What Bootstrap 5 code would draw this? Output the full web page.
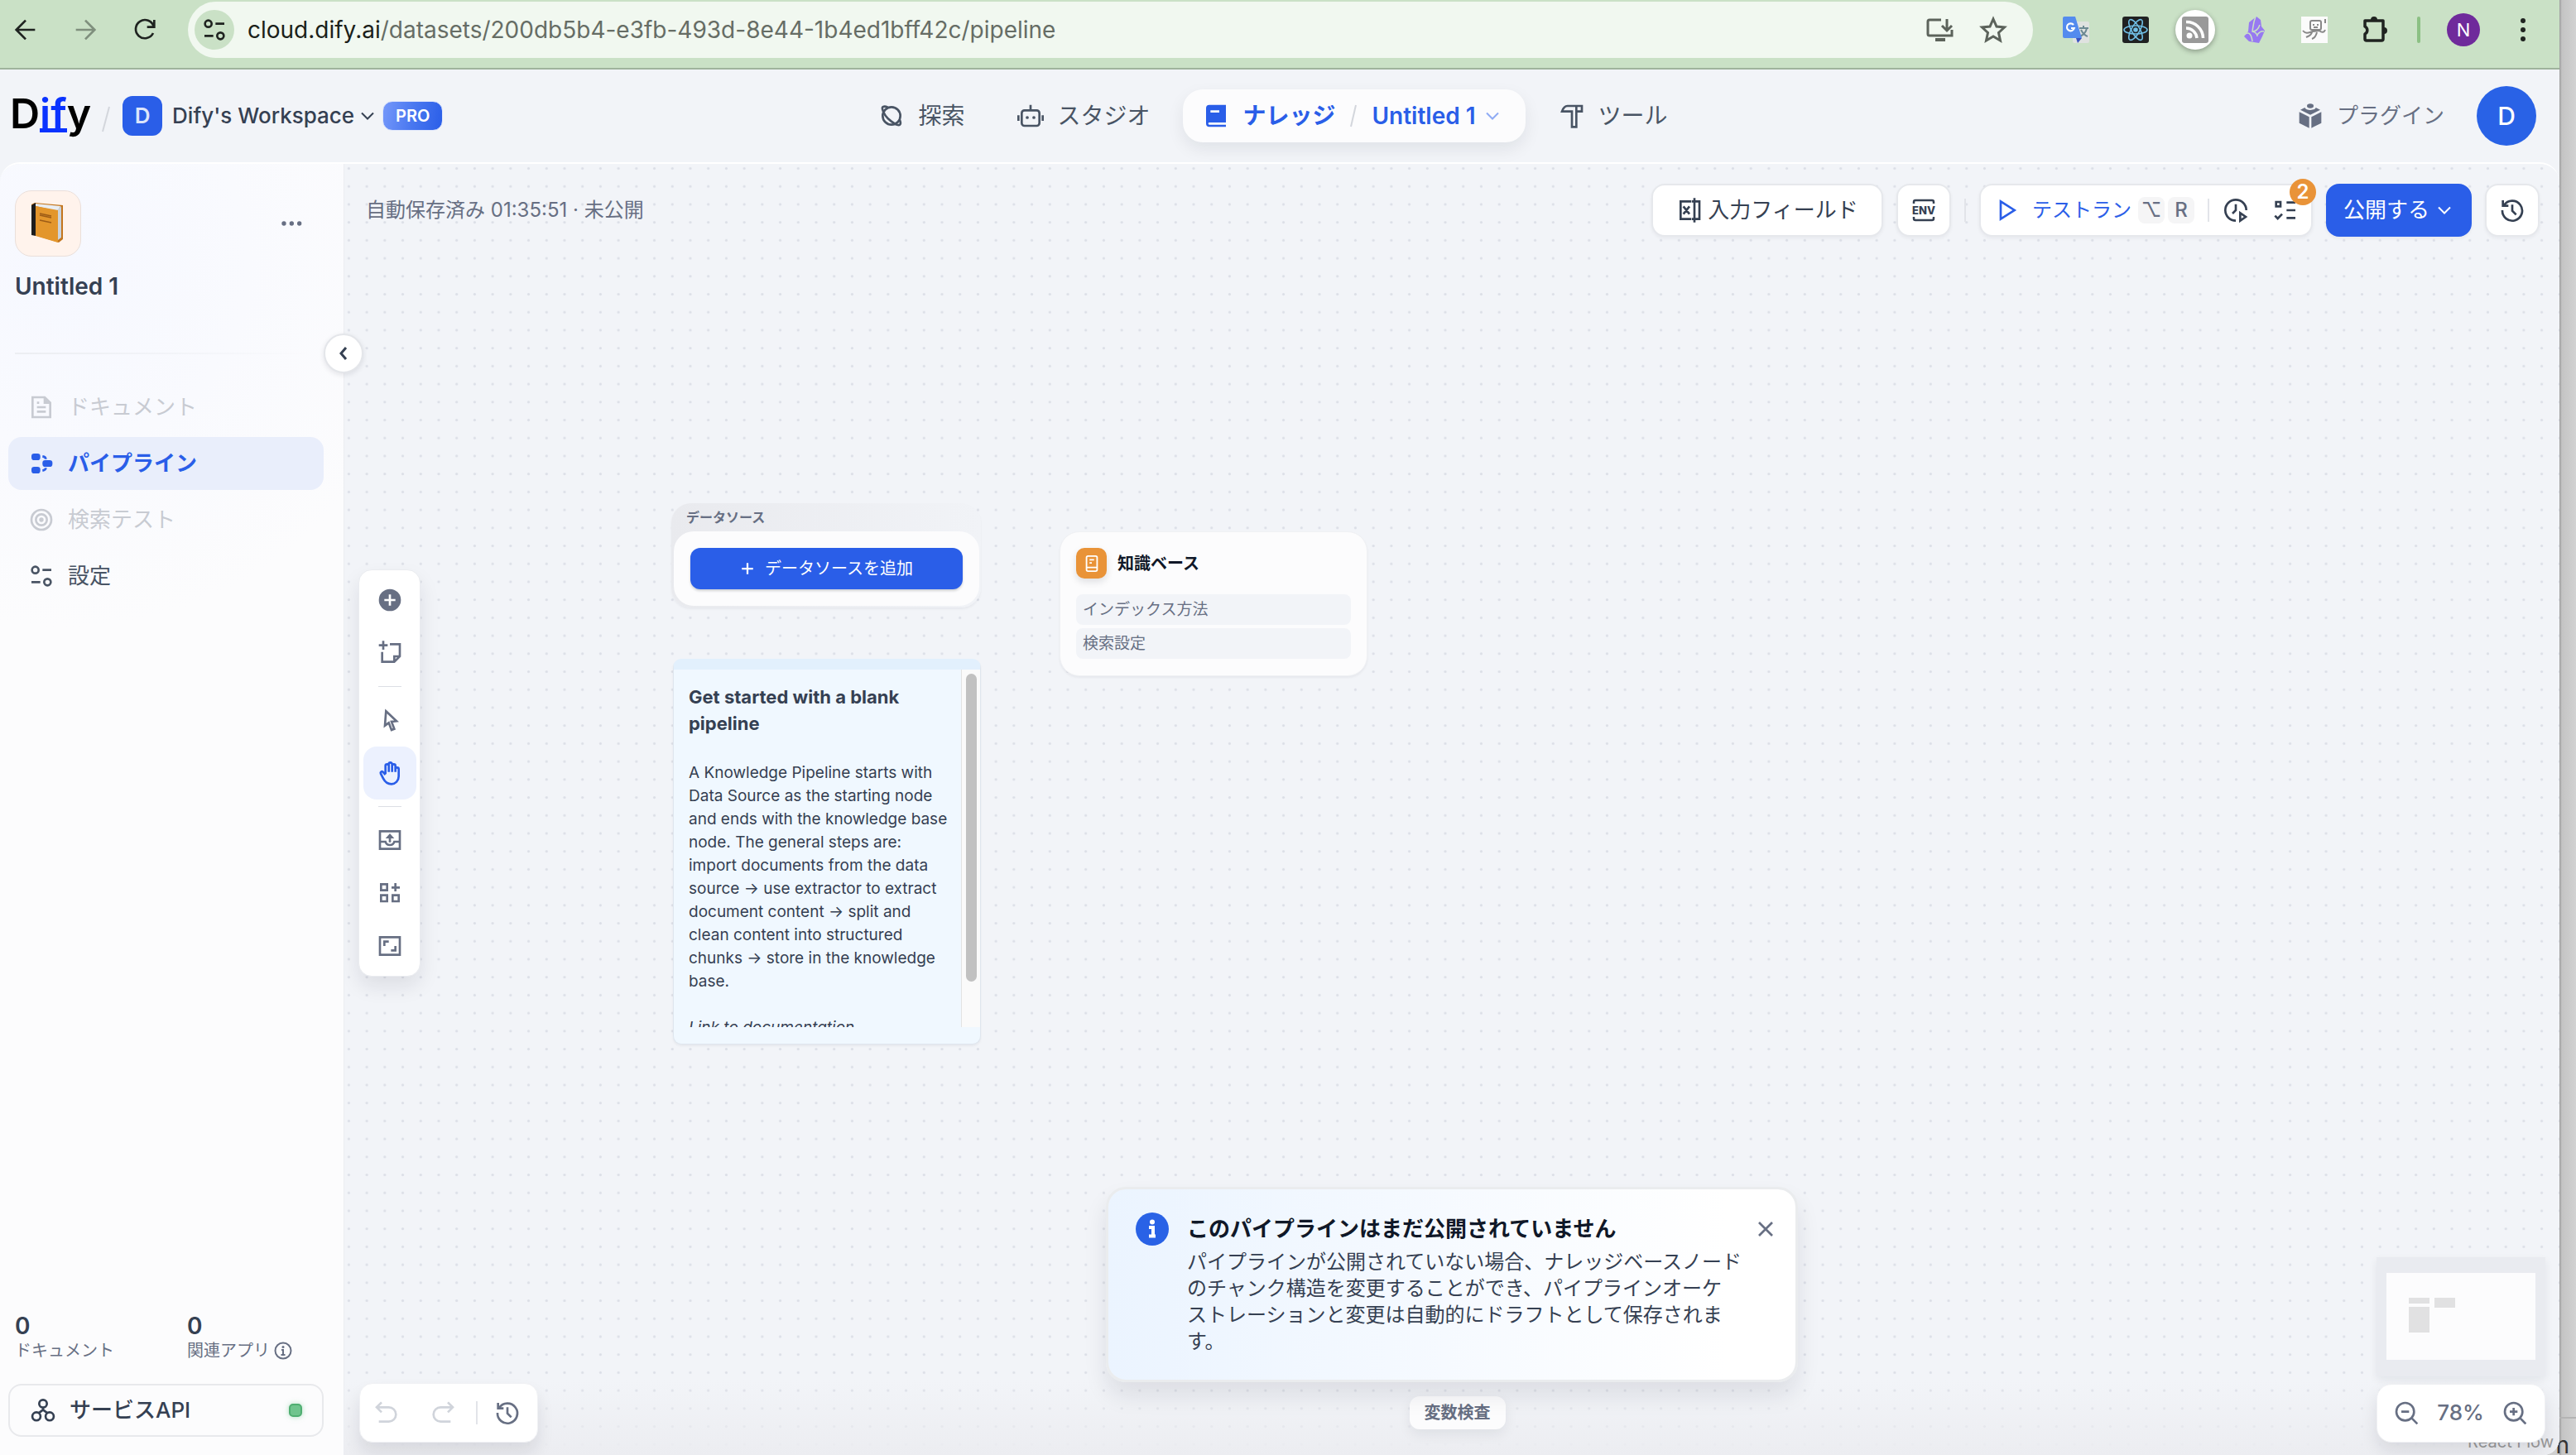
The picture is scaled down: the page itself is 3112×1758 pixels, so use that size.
<!DOCTYPE html>
<html lang="ja">
<head>
<meta charset="utf-8">
<meta name="viewport" content="width=device-width, initial-scale=1">
<title>Untitled 1 - Dify</title>
<link href="https://cdn.jsdelivr.net/npm/bootstrap@5.3.0/dist/css/bootstrap.min.css" rel="stylesheet">
<style>
:root{--blue:#2a5ee8;--ink:#354052;--soft:#676f83;--bg:#f2f4f8;--faint:#c8cbd2}
body{font-family:Inter,"Noto Sans CJK JP",sans-serif;font-size:26px;line-height:32px;color:var(--ink);background:#cfcfcf;overflow:hidden}
a{color:inherit;text-decoration:none}
svg{display:block;flex:none}
.ic{width:32px;height:32px;fill:none;stroke:currentColor;stroke-width:2}
.ic-s{width:24px;height:24px}
.bold-line{stroke-width:3}
.f{fill:currentColor;stroke:none}
.plain{border:0;background:none;padding:0;color:inherit;display:flex;align-items:center;justify-content:center}
.desk{width:20px;background:linear-gradient(90deg,#9c9c9c,#c4c4c4 3px,#d2d2d2);position:relative}
.desk-line{position:absolute;left:0;right:0;bottom:44px;height:2px;background:#b4b4b4}
.desk-n{position:absolute;right:8px;bottom:-4px;font-size:28px;color:#333}
.win{position:relative;z-index:1;background:var(--bg);border-radius:0 0 20px 0;overflow:hidden;min-width:0}
/* browser bar */
.chrome-bar{height:84px;background:#cae1c6;border-bottom:2px solid #9fb39c;color:#1f2320;padding:0 28px 10px 15px}
.fwd{margin-left:40px;color:#7f8f7d}
.reload{margin-left:40px}
.addr{height:68px;border-radius:34px;background:#f1f8f0;padding:0 30px 0 8px;margin-left:36px;margin-right:36px}
.site{width:48px;height:48px;border-radius:50%;background:#cae1c6}
.url{font-family:Inter,sans-serif;font-size:28px;color:#666d65;margin-left:16px}
.url b{font-weight:400;color:#1b1f1a}
.addr-icons{gap:28px}
.ext-row{gap:40px}
.rss{width:48px;height:48px;border-radius:50%;background:#fff;box-shadow:0 2px 6px #0005;margin:0 -8px}
.bar-sep{width:4px;height:32px;border-radius:2px;background:#8cc084;margin:0 32px 0 34px}
.me{width:40px;height:40px;border-radius:50%;background:#6f2a9b;color:#fff;font-size:22px;margin-right:36px}
/* app header */
.app-head{height:112px;padding:0 28px 0 12px}
.side-col{flex:1 1 0}
.logo{font-size:50px;line-height:56px;font-weight:600;color:#000;height:62px}
.logo i{font-style:normal;color:#0a33ff;background:linear-gradient(#0a33ff,#0a33ff) no-repeat 0 48px/100% 5px}
.slash{margin:8px 14px 0 12px}
.wsq{width:48px;height:48px;border-radius:12px;background:var(--blue);color:#dce5fb;font-weight:600;font-size:26px}
.ws-name{margin-left:12px;gap:4px;font-weight:500}
.pro{height:36px;padding:0 15px;border-radius:12px;background:linear-gradient(100deg,#7598fa,#4a78f0 50%,#2a5ee8);color:#fff;font-size:20px;font-weight:600;border:1px solid #dfe6fb;margin-left:6px}
.tab{height:64px;padding:0 28px;border-radius:24px;font-size:28px;color:#495464;gap:16px}
.tab-first{margin-right:8px}
.tab-on{background:#fcfcfd;color:var(--blue);font-weight:600;box-shadow:0 8px 20px #10182814;margin:0 12px;padding-left:24px}
.plug{gap:16px;color:var(--soft)}
.avatar{width:72px;height:72px;border-radius:50%;background:#2962e6;color:#fff;font-weight:500;font-size:30px;margin-left:39px}
/* body */
.main{border-top:2px solid #fff;border-radius:24px 24px 0 0;overflow:hidden;min-height:0}
.side{width:416px;background:radial-gradient(circle at 80px 120px,#f6f8ff,#fcfcfd 440px);border-right:1px solid #eceef2;padding:32px 24px 22px 10px;z-index:2}
.book{width:80px;height:80px;border-radius:20px;background:#fff3ec;border:1px solid #eadfda;margin-left:8px}
.more{color:var(--soft);margin-right:22px}
.side h1{font-size:28px;line-height:32px;font-weight:600;margin:20px 0 0 8px}
.rule{height:2px;margin:64px 12px 0 8px;background:linear-gradient(90deg,#eceef2,#fcfcfd00)}
.menu{gap:4px;margin-top:32px}
.menu a{height:64px;border-radius:16px;padding-left:24px;gap:16px;color:#495464}
.menu .dim{color:var(--faint)}
.menu .on{background:#e9eefb;color:var(--blue);font-weight:600}
.collapse-btn{position:absolute;left:391px;top:205px;width:48px;height:48px;border-radius:50%;background:#fff;border:2px solid #e4e6ea;box-shadow:0 2px 6px #1018281a;z-index:3}
.stat{flex:0 0 208px;padding-left:8px}
.stat b{display:block;font-size:28px;font-weight:600}
.stat span{display:flex;align-items:center;gap:4px;font-size:20px;line-height:28px;color:var(--soft)}
.api{height:64px;border-radius:16px;border:2px solid #e8e9ec;padding:0 24px;gap:16px;font-weight:500;background:#fcfcfd;margin-top:26px;width:100%}
.dotg{width:16px;height:16px;border-radius:5px;background:#6fc48d;border:2px solid #4fae71;box-shadow:0 0 6px #6fc48d88}
/* canvas */
.canvas{background:var(--bg);min-width:0}
.grid-bg{position:absolute;inset:0;width:100%;height:100%}
.shade{position:absolute;left:0;right:0;bottom:0;height:90px;background:linear-gradient(#ecedf100,#ecedf1)}
.topbar{position:relative;padding:24px 24px 0 26px}
.saved{font-size:24px;color:var(--soft)}
.tbtn{height:64px;border-radius:16px;background:#fff;border:2px solid #e6e8ec;box-shadow:0 2px 4px #1018280d;color:var(--ink);display:flex;align-items:center;justify-content:center;padding:0}
.sq{width:66px;margin-left:16px}
.field-btn{width:280px;gap:6px}
.vsep{width:2px;height:28px;background:#e2e4e9}
.topbar .vsep{margin:0 16px}
.run-group{width:403px;padding-left:16px;justify-content:flex-start}
.run-btn{color:var(--blue);font-size:24px;gap:14px;margin-right:8px}
.key{width:32px;height:32px;border-radius:8px;background:#f5f5f6;color:var(--soft);font-size:24px;font-weight:500;display:grid;place-items:center;font-family:Inter,"DejaVu Sans",sans-serif;margin-right:4px}
.check-btn{margin-left:28px}
.count{position:absolute;right:-6px;top:-8px;width:32px;height:32px;border-radius:50%;background:#e99338;color:#fff;font-size:24px;font-weight:600;display:grid;place-items:center}
.pub{background:var(--blue);border-color:var(--blue);color:#fff;width:176px;gap:6px;margin-left:16px}
.tools{position:absolute;left:17px;top:490px;width:75px;padding:4px;border-radius:16px;background:#fff;border:1px solid #eaecf0;box-shadow:0 12px 24px #10182818;color:var(--soft)}
.tools button{width:64px;height:64px;border-radius:16px}
.tools .on{background:#ecf1fe;color:var(--blue)}
.tools hr{width:28px;margin:8px 0;border:0;height:1px;background:#dcdfe4;opacity:1}
.node{position:absolute}
.ds{left:395px;top:410px;width:374px;border-radius:24px;background:linear-gradient(90deg,#e9eaee,#f1f3f7);padding:0 2px 2px 3px;box-shadow:0 2px 3px #1018280d}
.ds h2{font-size:16px;line-height:34px;font-weight:600;color:var(--soft);margin:0;padding-left:15px}
.ds div{background:#fcfcfd;border-radius:24px;padding:20px}
.ds button{height:50px;width:100%;border-radius:12px;background:var(--blue);color:#fff;font-size:20px;gap:12px;box-shadow:0 2px 3px #10182830}
.memo{left:397px;top:598px;width:372px;height:466px;border-radius:10px;background:#f0f8ff;border:1px solid #dfe6ee;border-top:13px solid #e2f0fd;box-shadow:0 2px 3px #1018280d}
.memo-text{padding:17px 10px 0 18px;height:432px;overflow:hidden;font-size:19px;line-height:28px}
.memo-text h3{font-size:22px;line-height:32px;font-weight:700;margin:0 0 30px}
.memo-text p{margin:0 0 28px}
.track{width:23px;height:432px;background:#fafafa;border-left:1px solid #e3e3e3;padding:5px 4px 0 5px}
.thumb{width:13px;height:372px;border-radius:7px;background:#c1c1c1}
.kb{left:864px;top:444px;width:372px;border-radius:24px;background:#fcfcfd;border:1px solid #f0f1f4;padding:19px;padding-bottom:20px;box-shadow:0 2px 3px #1018280d}
.kb-head{gap:13px;margin-bottom:19px}
.kb h2{font-size:20px;line-height:28px;font-weight:600;margin:0;color:#101828}
.kbi{width:37px;height:37px;border-radius:10px;background:#e99338;color:#fff;box-shadow:0 4px 8px #10182820}
.ic-m{width:22px;height:22px}
.kb p{margin:0;height:37px;line-height:37px;font-size:19px;border-radius:8px;background:var(--bg);color:var(--soft);padding-left:8px}
.notice{position:absolute;left:50%;bottom:88px;width:836px;margin-left:-418px;border-radius:24px;border:3px solid #eaecee;background:linear-gradient(90deg,#ebf4ff,#fff 90%) padding-box;padding:28px 20px 28px 33px;box-shadow:0 16px 28px #10182818}
.notice-text{flex:1;margin:4px 8px 0 22px}
.notice-text h2{font-size:26px;line-height:32px;font-weight:700;margin:0 0 8px;color:#101828}
.notice-text p{font-size:24px;line-height:32px;margin:0;padding-bottom:2px}
.close-btn{color:var(--soft);margin-top:4px}
.foot{position:absolute;left:18px;right:17px;bottom:15px;align-items:center}
.hist{height:72px;width:216px;border-radius:16px;background:#fff;border:1px solid #f0f1f4;box-shadow:0 12px 20px #10182818;color:var(--soft);padding:0 16px}
.hist .faded{color:#d0d4db;margin-right:36px}
.hist .faded+.faded{margin-right:24px}
.hist .vsep{margin-right:20px}
.vars{height:40px;border-radius:12px;background:#fcfcfd;border:0;padding:0 18px;font-size:20px;line-height:32px;font-weight:600;color:var(--soft);box-shadow:0 6px 16px #10182812}
.zoombar{height:71px;width:204px;border-radius:18px;background:#fff;border:1px solid #f0f1f4;box-shadow:0 10px 20px #10182818;color:var(--soft);font-weight:500;padding:0 20px 0 19px}
.minimap{position:absolute;right:17px;bottom:95px;width:204px;height:144px;background:#e9ebf0;box-shadow:0 4px 10px #10182812}
.rf{position:absolute;right:7px;bottom:0;font-size:20px;color:#999}
</style>
</head>
<body class="d-flex vh-100">
<svg width="0" height="0" class="position-absolute">
<symbol id="chev" viewBox="0 0 24 24"><path d="M5 8.500l7 7 7-7"/></symbol>
<symbol id="hist" viewBox="0 0 24 24"><path d="M4.500 7.500A9 9 0 1 1 3 12M3.500 3v5H8.500M12 7v5.500l3.500 3.500"/></symbol>
<symbol id="set" viewBox="0 0 24 24"><circle cx="6.500" cy="6.500" r="3"/><circle cx="17.500" cy="17.500" r="3"/><path d="M13 6.500h8M3 17.500h8"/></symbol>
<symbol id="info" viewBox="0 0 24 24"><circle cx="12" cy="12" r="9.500"/><path d="M10 11h2v6M9.500 17h5"/><circle fill="currentColor" stroke="none" cx="12" cy="7.500" r="1.500"/></symbol>
</svg>
<div class="win flex-grow-1 d-flex flex-column">
  <div class="chrome-bar d-flex align-items-center">
    <button class="plain" aria-label="Back"><svg class="ic" viewBox="0 0 24 24"><path d="M20.500 12H4M12 3.500L3.500 12l8.500 8.500"/></svg></button>
    <button class="plain fwd" aria-label="Forward"><svg class="ic" viewBox="0 0 24 24"><path d="M3.500 12H20M12 3.500l8.500 8.500-8.500 8.500"/></svg></button>
    <button class="plain reload" aria-label="Reload"><svg class="ic" viewBox="0 0 24 24"><path d="M19.500 15A8.300 8.300 0 1 1 20 9M20.500 3v6.500H14"/></svg></button>
    <div class="addr flex-grow-1 d-flex align-items-center">
      <button class="plain site" aria-label="Site information"><svg class="ic" viewBox="0 0 24 24"><use href="#set"/></svg></button>
      <div class="url flex-grow-1"><b>cloud.dify.ai</b>/datasets/200db5b4-e3fb-493d-8e44-1b4ed1bff42c/pipeline</div>
      <div class="addr-icons d-flex align-items-center">
      <svg width="36" height="32" viewBox="0 0 36 32" fill="none" stroke="#5c635b" stroke-width="3"><path d="M19 4H5a2 2 0 0 0-2 2v15a2 2 0 0 0 2 2h27v-7M26 3v13M20 11l6 6 6-6"/><path d="M12 26h12v4H12z" fill="#5c635b" stroke="none"/></svg>
      <svg width="36" height="36" viewBox="0 0 36 36" fill="none" stroke="#5c635b" stroke-width="3"><path d="M18 5l4 9 9.500 1-7 6.500 2 9.500-8.500-5-8.500 5 2-9.500-7-6.500L14 14z"/></svg>
      </div>
    </div>
    <div class="ext-row d-flex align-items-center">
    <svg width="32" height="32" viewBox="0 0 32 32"><rect x="12" y="6" width="20" height="26" rx="2" fill="#dfe2e0"/><path d="M20 14h11M25 11v3M29 14c-1 5-4 8-8 10M22 16c2 4 5 7 8 8" stroke="#6d8a93" stroke-width="2" fill="none"/><path d="M16 26h7l-5 6z" fill="#3a53c0"/><path d="M2 0h13l8 26H2a2 2 0 0 1-2-2V2a2 2 0 0 1 2-2z" fill="#548bee"/><path d="M13 10a4.500 4.500 0 1 0 .8 4H10" stroke="#fff" stroke-width="2.200" fill="none"/></svg>
    <svg width="32" height="32" viewBox="0 0 32 32"><rect width="32" height="32" rx="3" fill="#202122"/><g fill="none" stroke="#70bfe6" stroke-width="1.600"><ellipse cx="16" cy="16" rx="14" ry="5"/><ellipse cx="16" cy="16" rx="14" ry="5" transform="rotate(60 16 16)"/><ellipse cx="16" cy="16" rx="14" ry="5" transform="rotate(120 16 16)"/></g><circle cx="16" cy="16" r="2.800" fill="#70bfe6"/></svg>
    <span class="rss d-flex align-items-center justify-content-center"><svg width="32" height="32" viewBox="0 0 32 32"><rect width="32" height="32" rx="3" fill="#999"/><circle cx="9" cy="23" r="3.500" fill="#fff"/><path d="M5 14a13 13 0 0 1 13 12M5 6.500A20 20 0 0 1 25.500 26" fill="none" stroke="#fff" stroke-width="3.500"/></svg></span>
    <svg width="32" height="32" viewBox="0 0 32 32"><path d="M18 0l-9 7-1 11-5 6 6 6 12 2 4-8 3-7-4-5-1-8z" fill="#9779f1"/><path d="M17 0c-3 7-3 12-4 18 4 1 6 3 6 6M3 22c6-5 9 0 10 8M13 18c4 0 7-2 9-8M19 22c3-4 5-5 8-4" fill="none" stroke="#cae1c6" stroke-width="1.500"/></svg>
    <svg width="32" height="32" viewBox="0 0 32 32"><rect width="32" height="32" fill="#fbfbfb"/><g fill="none" stroke="#888" stroke-width="2"><rect x="11" y="5" width="13" height="11" rx="2"/><path d="M15 9v2M20 9v2M15 13h5M2 17c4 5 8 2 12 1l8-1c3 3 6 2 7-1M13 19c-1 4-5 5-7 6M19 19c-1 4-3 7-6 8M29 3v5"/></g></svg>
    <svg width="34" height="34" viewBox="0 0 34 34" fill="none" stroke="#1f2320" stroke-width="3.500"><path d="M5 6h22v22q0 2-2 2H7q-2 0-2-2v-6a5 5 0 0 0 0-9z" stroke-linejoin="round"/><path d="M12 5a4 4 0 0 1 8 0zM28 14a4 4 0 0 1 0 8z" fill="#1f2320" stroke="none"/></svg>
    </div>
    <span class="bar-sep"></span>
    <button class="plain me">N</button>
    <button class="plain" aria-label="Menu"><svg width="32" height="32" viewBox="0 0 32 32" fill="#1f2320"><circle cx="16" cy="5" r="3"/><circle cx="16" cy="16" r="3"/><circle cx="16" cy="27" r="3"/></svg></button>
  </div>

  <header class="app-head d-flex align-items-center">
    <div class="side-col d-flex align-items-center">
      <a href="#" class="logo">D<i>if</i>y</a>
      <svg class="slash" width="12" height="32" viewBox="0 0 12 32" stroke="#d3d6dc" stroke-width="2"><path d="M10 1L2 31"/></svg>
      <span class="wsq d-flex align-items-center justify-content-center">D</span>
      <button class="plain ws-name">Dify's Workspace <svg class="ic ic-s" viewBox="0 0 24 24"><use href="#chev"/></svg></button>
      <span class="pro d-flex align-items-center">PRO</span>
    </div>
    <nav class="d-flex align-items-center">
      <a href="#" class="tab tab-first d-flex align-items-center"><svg class="ic" viewBox="0 0 24 24"><circle cx="12" cy="12" r="8"/><path d="M9 4.500C6 3 3 3 3.800 6c.8 3.500 4 8 8 11s7.200 4.500 8.200 2.500c.5-1-.2-3-1-4.500"/></svg>探索</a>
      <a href="#" class="tab d-flex align-items-center"><svg class="ic" viewBox="0 0 24 24"><rect x="4" y="7" width="16" height="14" rx="2.500"/><path d="M12 2v5M1 11.500v5M23 11.500v5"/><circle class="f" cx="9" cy="13.500" r="1.400"/><circle class="f" cx="15" cy="13.500" r="1.400"/></svg>スタジオ</a>
      <div class="tab tab-on d-flex align-items-center"><svg class="ic" viewBox="0 0 24 24"><path class="f" d="M6 2h15v16H6a1 1 0 0 0 0 2h15v2H6a3 3 0 0 1-3-3V5a3 3 0 0 1 3-3zm1 5v2h8V7z" fill-rule="evenodd"/></svg><a href="#">ナレッジ</a>
        <svg width="12" height="28" viewBox="0 0 12 28" stroke="#d3d6dc" stroke-width="2"><path d="M9 1L3 27"/></svg>
        <a href="#" class="d-flex align-items-center gap-2">Untitled 1 <svg width="24" height="24" viewBox="0 0 24 24" fill="none" stroke="#8fabf4" stroke-width="2"><use href="#chev"/></svg></a></div>
      <a href="#" class="tab d-flex align-items-center"><svg class="ic" viewBox="0 0 24 24"><path d="M8 3h13v5h-5v14h-4V8H3c1-3 3-5 5-5zM16 3v5"/></svg>ツール</a>
    </nav>
    <div class="side-col d-flex align-items-center justify-content-end">
      <a href="#" class="plug d-flex align-items-center"><svg class="ic" viewBox="0 0 24 24"><path class="f" d="M11 13v10l-9-4.500V8.500zM13 13v10l9-4.500V8.500zM3 6.500l4-2c1 3 9 3 10 0l4 2-9 4.500z"/><ellipse class="f" cx="12" cy="3" rx="3" ry="2"/></svg>プラグイン</a>
      <button class="plain avatar">D</button>
    </div>
  </header>

  <div class="main d-flex flex-grow-1 position-relative">
    <aside class="side d-flex flex-column flex-shrink-0">
      <div class="d-flex align-items-center justify-content-between">
        <div class="book d-flex align-items-center justify-content-center"><svg width="40" height="50" viewBox="0 0 40 50"><path d="M0 2l4-2 34 3v41l-5 4L0 38z" fill="#c3751c"/><path d="M0 3l5-3v40l-5-1z" fill="#1d1d1d"/><path d="M5 1l30 3-3 6L5 4z" fill="#e9edf2"/><path d="M31 9l5-5v38l-4 3z" fill="#cbd3dc"/><path d="M5 4l27 5v39L5 40z" fill="#e3962c"/><path d="M10 13l14 3M10 15l14 3M10 21l14 3" stroke="#9c5b16" stroke-width="1.500"/></svg></div>
        <button class="plain more" aria-label="More"><svg class="ic" viewBox="0 0 24 24"><circle class="f" cx="4.500" cy="12" r="2"/><circle class="f" cx="11.500" cy="12" r="2"/><circle class="f" cx="18.500" cy="12" r="2"/></svg></button>
      </div>
      <h1>Untitled 1</h1>
      <div class="rule"></div>
      <nav class="menu d-flex flex-column">
        <a href="#" class="dim d-flex align-items-center"><svg class="ic" viewBox="0 0 24 24"><path d="M4 3h11l5 5v13H4zM8 12h8M8 16h8M8 8h2"/><path class="f" d="M14 3l6 6h-6z"/></svg>ドキュメント</a>
        <a href="#" class="on d-flex align-items-center"><svg class="ic" viewBox="0 0 24 24"><rect class="f" x="3" y="3" width="8" height="6" rx="2.500"/><rect class="f" x="13" y="9" width="9" height="6" rx="2.500"/><rect class="f" x="3" y="15" width="8" height="6" rx="2.500"/><path d="M13 5.500q3 .5 3 2.500M13 18.500q3-.5 3-2.500"/></svg>パイプライン</a>
        <a href="#" class="dim d-flex align-items-center"><svg class="ic" viewBox="0 0 24 24"><circle cx="12" cy="12" r="9"/><circle cx="12" cy="12" r="5"/><circle class="f" cx="12" cy="12" r="2"/></svg>検索テスト</a>
        <a href="#" class="d-flex align-items-center"><svg class="ic" viewBox="0 0 24 24"><use href="#set"/></svg>設定</a>
      </nav>
      <div class="mt-auto d-flex">
        <div class="stat"><b>0</b><span>ドキュメント</span></div>
        <div class="stat"><b>0</b><span>関連アプリ <svg class="ic ic-s" viewBox="0 0 24 24"><use href="#info"/></svg></span></div>
      </div>
      <button class="api plain justify-content-start"><svg class="ic" viewBox="0 0 24 24"><circle cx="12" cy="6" r="3.500"/><circle cx="6" cy="17.500" r="3.700"/><circle cx="18" cy="17.500" r="3.700"/><path d="M12 9.500v3M8 14.500l4-3 4 3"/></svg>サービスAPI<span class="dotg ms-auto"></span></button>
    </aside>

    <section class="canvas flex-grow-1 position-relative">
      <svg class="grid-bg"><defs><pattern id="dots" width="21.715" height="21.715" patternUnits="userSpaceOnUse"><circle cx="5.400" cy="5.500" r="1.600" fill="#dcdfe7"/></pattern></defs><rect width="100%" height="100%" fill="url(#dots)"/></svg>
      <div class="shade"></div>
      <div class="topbar d-flex align-items-center">
        <span class="saved me-auto">自動保存済み 01:35:51 · 未公開</span>
        <button class="tbtn field-btn"><svg class="ic" viewBox="0 0 24 24"><path d="M13.500 4H4v16h9.500M14 4h7v16h-7M16.500 1v22M6.500 8.500l5.500 7M12 8.500l-5.500 7"/></svg>入力フィールド</button>
        <button class="tbtn sq" aria-label="ENV"><svg width="28" height="28" viewBox="0 0 28 28" fill="none" stroke="#354052" stroke-width="2.500"><path d="M2 6V4q0-2 2-2h20q2 0 2 2v2M2 22v2q0 2 2 2h20q2 0 2-2v-2"/><text x="14" y="18.500" font-size="13" font-weight="800" text-anchor="middle" fill="#354052" stroke="none">ENV</text></svg></button>
        <span class="vsep"></span>
        <div class="tbtn run-group position-relative">
          <button class="plain run-btn"><svg class="ic" viewBox="0 0 24 24"><path d="M6 4l12.500 8L6 20z"/></svg>テストラン</button>
          <span class="key">⌥</span><span class="key me-0">R</span>
          <span class="vsep"></span>
          <button class="plain" aria-label="Run history"><svg class="ic" viewBox="0 0 24 24"><path d="M12 21.500A9.500 9.500 0 1 1 21.500 12M12 6.500V12l-3 3M16 14.500l5 3.500-5 3.500z"/></svg></button>
          <button class="plain check-btn" aria-label="Checklist"><svg class="ic" viewBox="0 0 24 24"><path d="M3.500 4.500h4v4h-4zM13 5h8M13 12h8M13 19h8M2.500 17l2.500 2.500 4-4"/></svg></button>
          <span class="count">2</span>
        </div>
        <button class="tbtn pub">公開する<svg class="ic ic-s" viewBox="0 0 24 24"><use href="#chev"/></svg></button>
        <button class="tbtn sq" aria-label="Version history"><svg class="ic" viewBox="0 0 24 24"><use href="#hist"/></svg></button>
      </div>

      <div class="tools d-flex flex-column align-items-center">
        <button class="plain" aria-label="Add"><svg class="ic" viewBox="0 0 24 24"><circle class="f" cx="12" cy="12" r="10"/><path d="M12 7v10M7 12h10" stroke="#fff"/></svg></button>
        <button class="plain" aria-label="Note"><svg class="ic" viewBox="0 0 24 24"><path d="M12 4h9v11l-5 5H5v-9M16 20v-5h5M6 1v8M2 5h8"/></svg></button>
        <hr>
        <button class="plain" aria-label="Pointer"><svg class="ic" viewBox="0 0 24 24"><path d="M8.500 4l9.500 9-4.500.5 2.500 6.500-2.500 1-2.500-6.500-3.500 2.500z"/></svg></button>
        <button class="plain on" aria-label="Hand"><svg class="ic" viewBox="0 0 24 24"><path d="M8 13V5.500a1.500 1.500 0 0 1 3 0V11 4a1.500 1.500 0 0 1 3 0v7-5.500a1.500 1.500 0 0 1 3 0V11 8.500a1.500 1.500 0 0 1 3 0V15c0 4-3 7-6.500 7-4 0-6-2-7.500-5l-2.300-4.500c-.6-1.500 1-2.300 2-1.500L8 13.500"/></svg></button>
        <hr>
        <button class="plain" aria-label="Import"><svg class="ic" viewBox="0 0 24 24"><path d="M3 4h18v16H3zM3 13.500h5c1 4 7 4 8 0h5M12 14V9"/><path class="f" d="M12 6l4 4.500H8z"/></svg></button>
        <button class="plain" aria-label="Organize"><svg class="ic" viewBox="0 0 24 24"><path d="M4 4h5.500v5.500H4zM4 14h5.500v5.500H4zM14.500 14H20v5.500h-5.500zM17 3v7.500M13.500 7H21"/></svg></button>
        <button class="plain" aria-label="Maximize"><svg class="ic" viewBox="0 0 24 24"><path d="M3 4h18v16H3zM7 12V8h4M17 12v4h-4"/></svg></button>
      </div>

      <div class="node ds"><h2>データソース</h2><div><button class="plain"><svg width="18" height="18" viewBox="0 0 24 24" fill="none" stroke="currentColor" stroke-width="3"><path d="M12 3v18M3 12h18"/></svg>データソースを追加</button></div></div>

      <article class="node memo d-flex">
        <div class="memo-text flex-grow-1"><h3>Get started with a blank pipeline</h3><p>A Knowledge Pipeline starts with Data Source as the starting node and ends with the knowledge base node. The general steps are: import documents from the data source → use extractor to extract document content → split and clean content into structured chunks → store in the knowledge base.</p><a href="#"><em>Link to documentation</em></a></div>
        <div class="track flex-shrink-0"><div class="thumb"></div></div>
      </article>

      <div class="node kb">
        <div class="kb-head d-flex align-items-center"><span class="kbi d-flex align-items-center justify-content-center"><svg class="ic ic-m" viewBox="0 0 24 24"><rect x="5" y="2" width="14" height="20" rx="2"/><path d="M5 17h14M9 7h6M9 11h3"/></svg></span><h2>知識ベース</h2></div>
        <div class="d-flex flex-column gap-1"><p>インデックス方法</p><p>検索設定</p></div>
      </div>

      <div class="rf">React Flow</div>
      <div class="foot d-flex justify-content-between">
        <div class="hist d-flex align-items-center">
          <button class="plain faded" disabled aria-label="Undo"><svg class="ic" viewBox="0 0 24 24"><path d="M3 7h11a6.500 6.500 0 0 1 0 13H5M7.500 2.500L3 7l4.500 4.500"/></svg></button>
          <button class="plain faded" disabled aria-label="Redo"><svg class="ic" viewBox="0 0 24 24"><path d="M21 7H10a6.500 6.500 0 0 0 0 13h9M16.500 2.500L21 7l-4.500 4.500"/></svg></button>
          <span class="vsep"></span>
          <button class="plain" aria-label="History"><svg class="ic" viewBox="0 0 24 24"><use href="#hist"/></svg></button>
        </div>
        <button class="vars">変数検査</button>
        <div class="zoombar d-flex align-items-center justify-content-between"><button class="plain" aria-label="Zoom out"><svg class="ic" viewBox="0 0 24 24"><circle cx="11" cy="11" r="8"/><path d="M17 17l5 5M7.500 11h7"/></svg></button><span>78%</span><button class="plain" aria-label="Zoom in"><svg class="ic" viewBox="0 0 24 24"><circle cx="11" cy="11" r="8"/><path d="M17 17l5 5M7.500 11h7M11 7.500v7"/></svg></button></div>
      </div>
      <div class="minimap"><svg width="204" height="144"><rect x="12" y="19" width="180" height="105" fill="#fcfcfd"/><g fill="#e1e1e2"><rect x="39" y="49" width="25" height="7"/><rect x="70" y="49" width="25" height="12"/><rect x="39" y="60" width="25" height="31"/></g></svg></div>

      <div class="notice d-flex align-items-start">
        <svg width="40" height="40" viewBox="0 0 40 40"><circle cx="20" cy="20" r="20" fill="#2962e6"/><circle cx="20" cy="11.500" r="3" fill="#fff"/><path d="M16 18h5v10M16 28.500h8" stroke="#fff" stroke-width="4" fill="none"/></svg>
        <div class="notice-text"><h2>このパイプラインはまだ公開されていません</h2><p>パイプラインが公開されていない場合、ナレッジベースノード<br>のチャンク構造を変更することができ、パイプラインオーケ<br>ストレーションと変更は自動的にドラフトとして保存されま<br>す。</p></div>
        <button class="plain close-btn" aria-label="Close"><svg class="ic" viewBox="0 0 24 24"><path d="M6 6l12 12M18 6L6 18"/></svg></button>
      </div>
    </section>
    <button class="plain collapse-btn" aria-label="Collapse"><svg class="ic ic-s bold-line" viewBox="0 0 24 24"><path d="M15 5l-6 7 6 7"/></svg></button>
  </div>
</div>
<div class="desk flex-shrink-0"><div class="desk-line"></div><div class="desk-n">n</div></div>
<script src="https://cdn.jsdelivr.net/npm/bootstrap@5.3.0/dist/js/bootstrap.bundle.min.js"></script>
</body>
</html>
